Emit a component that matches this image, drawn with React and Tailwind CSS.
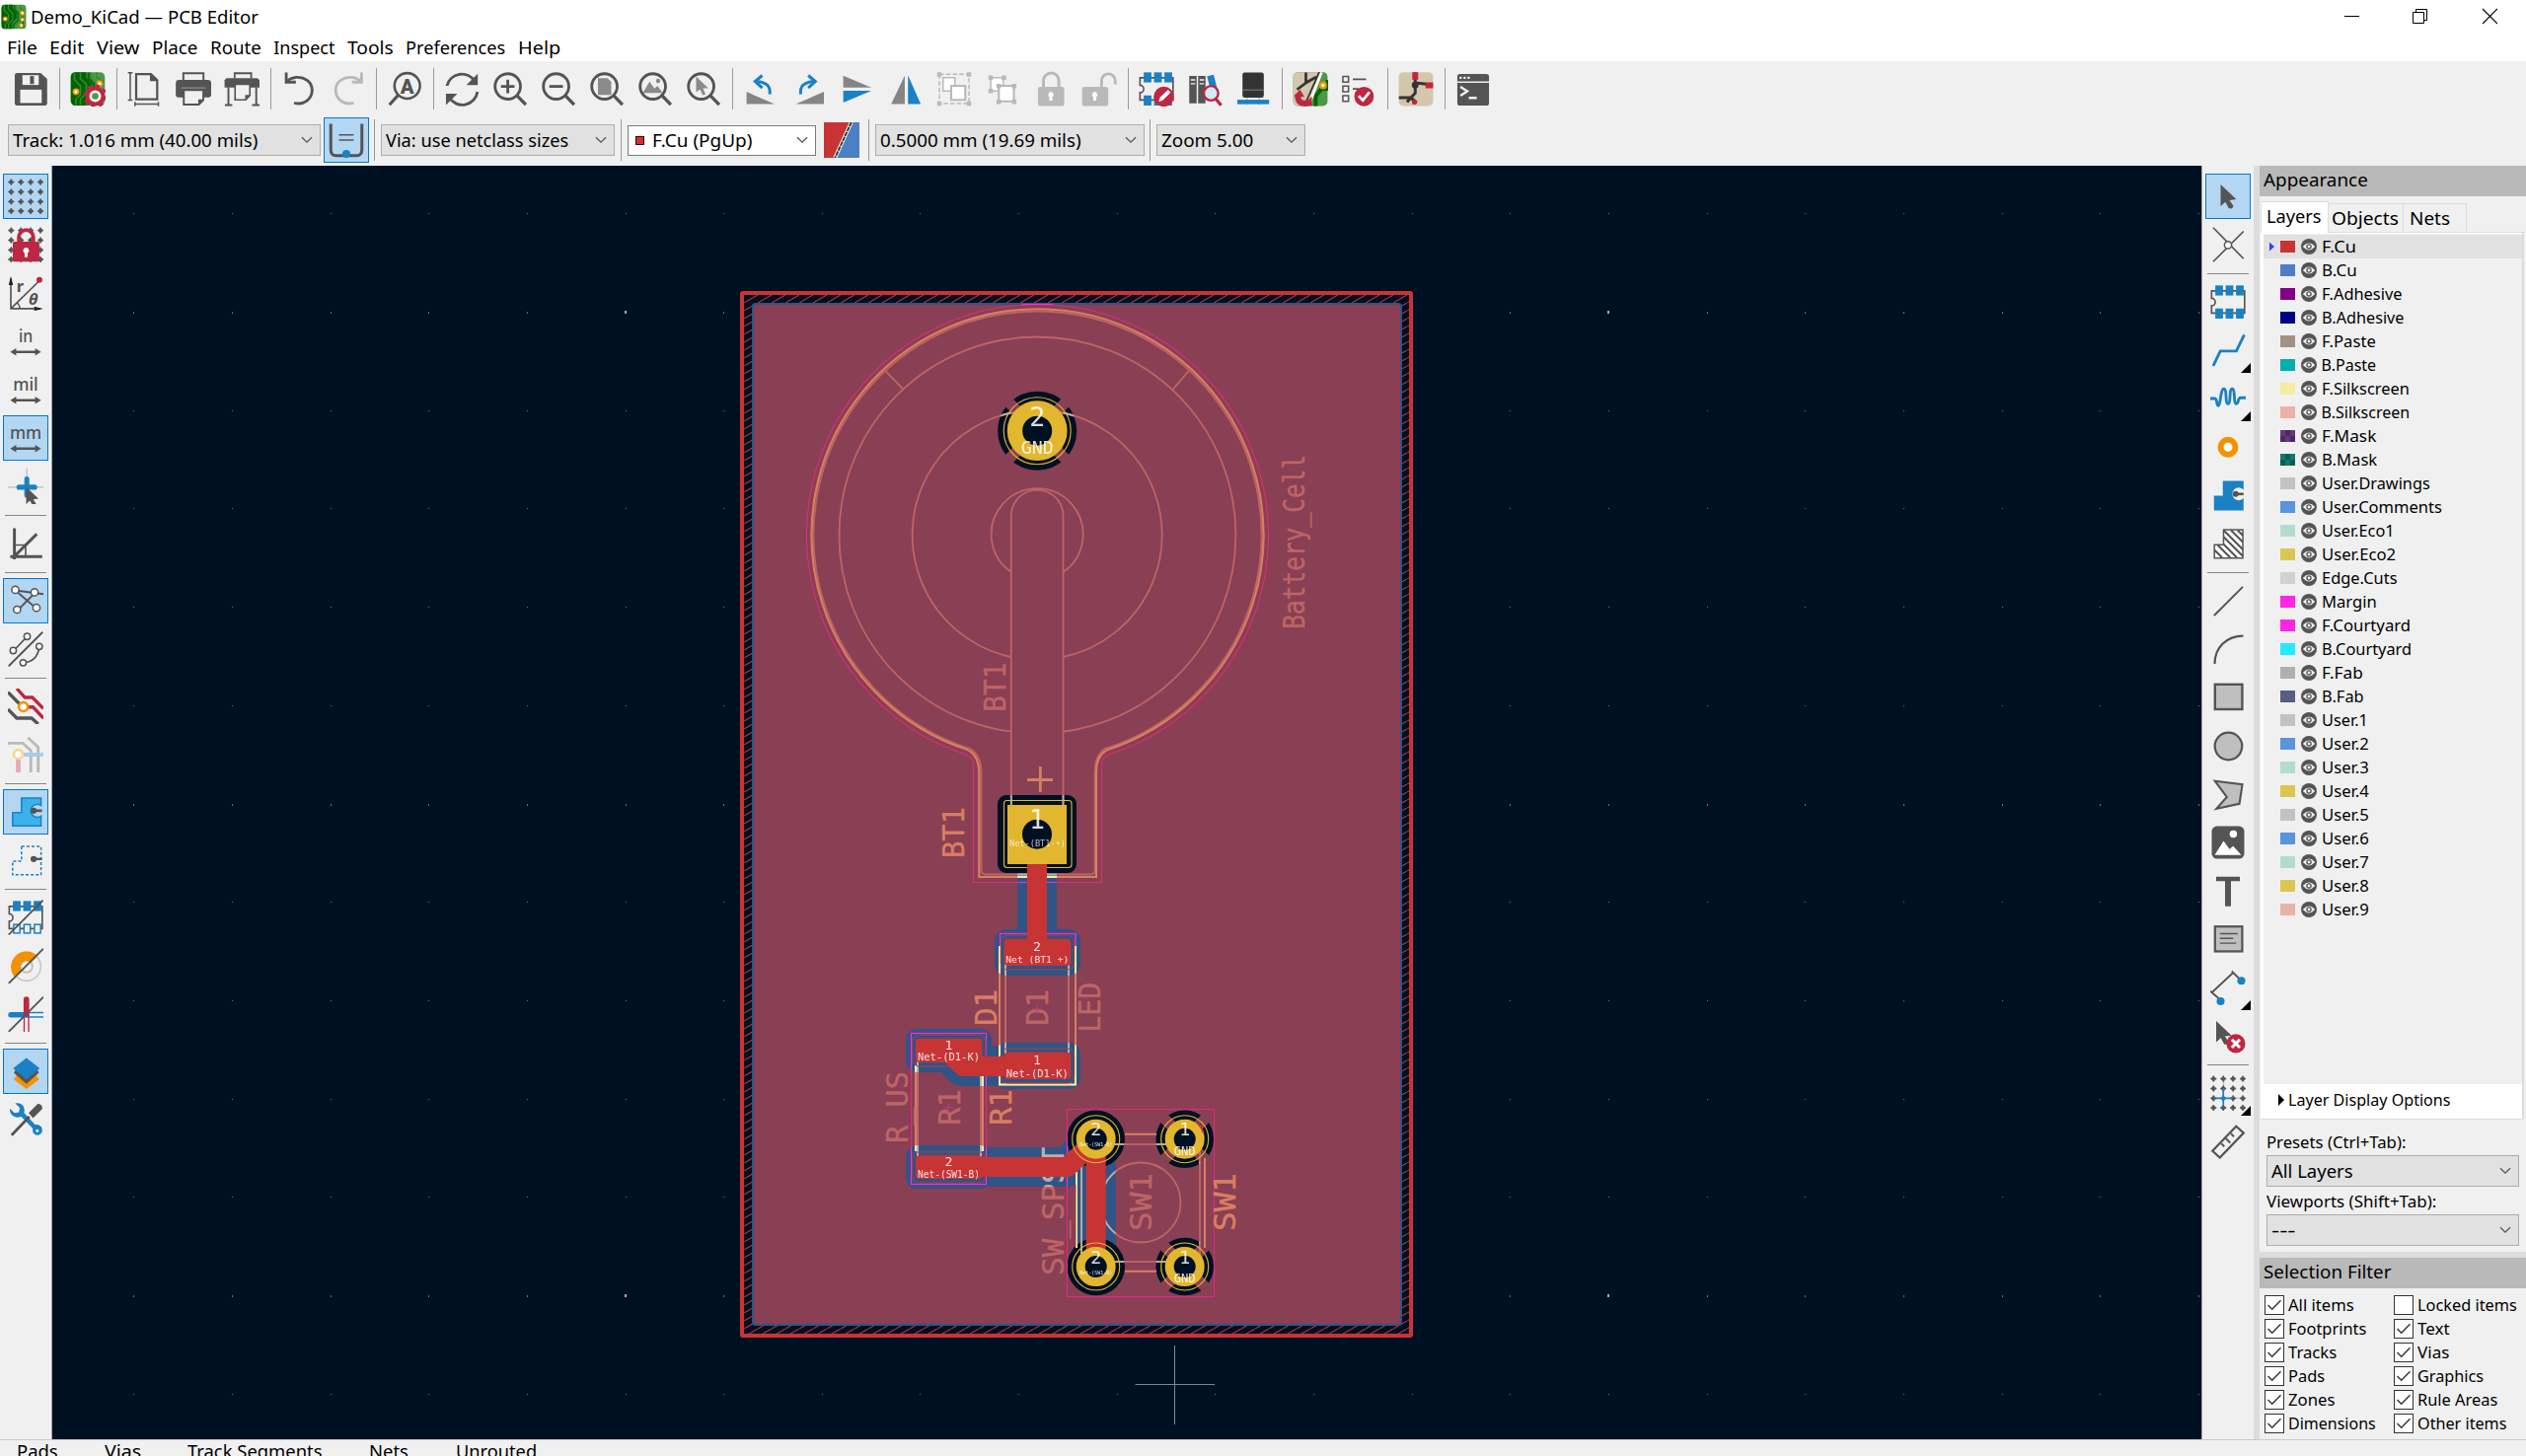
import React, { useLayoutEffect, useRef, useState } from "react";

const G = "#545454";
const B = "#1a81c4";
const R = "#bf2641";
const O = "#f39200";
const L = "#b9b9b9";

/* Single-line label squeezed or stretched to a given width. */
function T({ w, className = "", children }) {
  const ref = useRef(null);
  const [natural, setNatural] = useState(w + 2);
  useLayoutEffect(() => {
    const fit = () => ref.current && setNatural(ref.current.offsetWidth);
    fit();
    document.fonts?.ready.then(fit);
  }, [w]);
  return (
    <span
      ref={ref}
      className={"inline-block w-fit shrink-0 origin-left whitespace-nowrap " + className}
      style={{ transform: `scaleX(${(w + 2) / natural})`, marginRight: w + 2 - natural }}
    >
      {children}
    </span>
  );
}

function I({ children, className = "size-9" }) {
  return (
    <svg viewBox="0 0 24 24" fill="none" className={className + " shrink-0"}>
      {children}
    </svg>
  );
}

/* ---------- shared icon parts ---------- */
const Board = () => (
  <>
    <rect x="0.5" y="0.8" width="23" height="22.6" rx="3.2" fill="#4a9a45" />
    <path d="M0.5 4a3.2 3.2 0 0 1 3.2-3.2H11v3.6l3.6 4.2v5l-4 4.4v5.4H3.7a3.2 3.2 0 0 1-3.2-3.2Z" fill="#006400" />
    <path d="M3 1v5l4 4v6l-3 3v4M7 1v4l4 4v6l-4 4v4M14 1v4l5 5v5l-5 4v4M18 1v3l5 4" stroke="#338a33" strokeWidth="1.1" />
    <path d="M12.5 1v4l3.5 4v6l-4 4v4M20.5 12v10" stroke="#0a6a12" strokeWidth="1.6" />
    <circle cx="4" cy="14" r="1.7" fill="#fff" stroke={O} strokeWidth="1.2" />
    <circle cx="20" cy="8.5" r="1.7" fill="#fff" stroke={O} strokeWidth="1.2" />
  </>
);
const Lens = () => (
  <>
    <circle cx="10.4" cy="10.4" r="8.6" stroke={G} strokeWidth="1.9" />
    <path d="M16.6 16.6 22.6 22.8" stroke={G} strokeWidth="2.2" />
  </>
);
const Chip = ({ bottom = true }) => (
  <>
    <path d="M23.2 4.6H.9v5a2.4 2.4 0 0 1 0 5v5h22.3Z" stroke={G} strokeWidth="1.1" />
    {[3.4, 10.4, 17.4].map((x) => (
      <rect key={x} x={x} y="0.9" width="5.2" height="6.8" fill={B} />
    ))}
    {[3.4, 10.4, 17.4].map((x) =>
      bottom ? (
        <rect key={x} x={x} y="16.5" width="5.2" height="6.8" fill={B} />
      ) : (
        <rect key={x} x={x + 0.5} y="16.8" width="4.2" height="5.8" fill="#f0f0f0" stroke={B} strokeWidth="1" />
      )
    )}
  </>
);
const Dots = () => (
  <g fill={G}>
    {[2.2, 8.8, 15.4, 22].map((x) =>
      [2.4, 9, 15.6, 22].map((y) => (
        <path key={x + "-" + y} d={`M${x - 2} ${y}l1.2-.8.8-1.2.8 1.2 1.2.8-1.200.8-.8 1.200-.8-1.200Z`} stroke={G} strokeWidth=".5" />
      ))
    )}
  </g>
);
const Cursor = ({ x = 0, y = 0, s = 1 }) => (
  <path transform={`translate(${x} ${y}) scale(${s})`} d="M0 0v14.6l3.2-2.8 2.3 4.2c1.8 1 3.6-.6 2.8-2L6 10.6l4.6-.6Z" fill={G} />
);
const HArrow = () => (
  <path d="M1.6 19.2 5.6 16.7v1.7h12.8v-1.7l4 2.5-4 2.5V20H5.6v1.7Z" fill={G} />
);
const Unit = ({ t, w }) => (
  <>
    <text x="12" y="12.8" textAnchor="middle" textLength={w} lengthAdjust="spacingAndGlyphs" fontFamily="Noto Sans, sans-serif" fontWeight="500" fontSize="12.5" fill={G}>
      {t}
    </text>
    <HArrow />
  </>
);

/* ---------- main toolbar ---------- */
const topIcons = [
  <I>
    <path d="M2.8 1.3h16l4.4 4v16.5a1.5 1.5 0 0 1-1.5 1.5H2.8a1.5 1.5 0 0 1-1.5-1.5v-19A1.5 1.5 0 0 1 2.8 1.3Z" fill={G} />
    <rect x="6.5" y="2.8" width="11" height="6.6" fill="#f0f0f0" />
    <rect x="11.6" y="3.4" width="2.7" height="5.4" fill={G} />
    <rect x="5" y="12.6" width="14.5" height="9" fill="#f0f0f0" />
  </I>,
  "|",
  <I>
    <Board />
    <circle cx="17" cy="17" r="5.3" fill="#f0f0f0" stroke={R} strokeWidth="2.6" />
    <circle cx="17" cy="17" r="6.9" stroke={R} strokeWidth="2.2" strokeDasharray="2.7 2.72" />
    <circle cx="17" cy="17" r="2.2" fill="#4a9a45" />
  </I>,
  "|",
  <I>
    <path d="M6 2h10l4.200 4.200v12.900H6Z" stroke={G} strokeWidth="1.5" />
    <path d="M15.300 1.600v5.300h5.300Z" fill={G} />
    <path d="M2 1.200v18.400M.4 1.200h3.200M.4 19.600h3.200M5.200 22.400H21M5.200 20.900v3M21 20.900v3" stroke={G} strokeWidth="1" />
  </I>,
  <I>
    <path d="M5.2 6V1.5h13.6V6" stroke={G} strokeWidth="1.3" />
    <path d="M2.4 6h19.4A2.2 2.2 0 0 1 24 8.2V16a1.8 1.8 0 0 1-1.8 1.8H1.9A1.8 1.8 0 0 1 .1 16V8.2A2.2 2.2 0 0 1 2.4 6Z" fill={G} />
    <path d="M3.5 11.4h17" stroke="#888" strokeWidth="0.9" />
    <path d="M5.5 12.8h13.2v6.8l-3 3H5.5Z" fill="#f0f0f0" stroke={G} strokeWidth="1.3" />
    <path d="M15.3 22.6v-3.4h3.4Z" fill={G} />
  </I>,
  <I>
    <path d="M7.2 5V1.5h11.2V5" stroke={G} strokeWidth="1.2" />
    <path d="M.4 6.2 1.7 4.8h20.8L24 6.2V11.2H.4Z" fill={G} />
    <path d="M3 11v12M21.8 11v12M.6 23h5M19 23h5" stroke={G} strokeWidth="1.3" />
    <path d="M7.5 9h10v7.5l-2.8 3H7.5Z" fill="#f0f0f0" stroke={G} strokeWidth="1.1" />
    <path d="M14.3 19.5v-3.4h3.2Z" fill={G} />
  </I>,
  "|",
  <I>
    <path d="M3.4 1v6.5h6.5" stroke={G} strokeWidth="1.9" />
    <path d="M3.4 7.2C7 4 13 3 17.5 6.2c4.8 3.6 4.3 10.7-.3 14-2.5 1.8-5.5 2.3-8.5 1.3" stroke={G} strokeWidth="1.9" />
  </I>,
  <I>
    <g transform="translate(24 0) scale(-1 1)">
      <path d="M2.4 1v6.5h6.5" stroke={L} strokeWidth="1.9" />
      <path d="M2.4 7.2C6 4 12 3 16.5 6.2c4.8 3.6 4.3 10.7-.3 14-2.5 1.8-5.5 2.3-8.5 1.3" stroke={L} strokeWidth="1.9" />
    </g>
  </I>,
  "|",
  <I>
    <circle cx="13.8" cy="10" r="8.6" stroke={G} strokeWidth="1.7" />
    <path d="M7.6 16.4 1.8 22.8" stroke={G} strokeWidth="2.1" />
    <text x="13.8" y="15" textAnchor="middle" fontFamily="Roboto, sans-serif" fontWeight="900" fontSize="13.5" fill={G}>
      A
    </text>
  </I>,
  "|",
  <I>
    <path d="M2 10A10.3 10.3 0 0 1 20.8 7M22.6 14A10.3 10.3 0 0 1 3.4 17.6" stroke={G} strokeWidth="1.9" />
    <path d="M22.8 1.8v7.7h-7.7ZM1.3 23v-7.7H9Z" fill={G} />
  </I>,
  <I>
    <Lens />
    <path d="M10.4 5.8v9.2M5.8 10.4H15" stroke={G} strokeWidth="1.9" />
  </I>,
  <I>
    <Lens />
    <path d="M5.8 10.4H15" stroke={G} strokeWidth="1.9" />
  </I>,
  <I>
    <Lens />
    <path d="M6 4.8h6.4l2.6 2.6v8.8H6Z" fill="#8a8a8a" />
  </I>,
  <I>
    <Lens />
    <path d="m3.6 14.8 4.6-7.6 3.4 4.6 2-1.8 3.4 4.8Z" fill="#8a8a8a" />
    <circle cx="14" cy="6.6" r="1.5" fill="#8a8a8a" />
  </I>,
  <I>
    <Lens />
    <path d="M7 3.6v10.8l2.6-2 1.8 4 2-.8-1.8-4h3.6Z" fill="#8a8a8a" />
  </I>,
  "|",
  <I>
    <path d="M2.4 14v8.4h19Z" fill="#858585" />
    <path d="M18 15.6c.8-5-2-8.3-8.6-8.5" stroke={B} strokeWidth="2" />
    <path d="M13 3 8.2 7.1l4.8 4.3" stroke={B} strokeWidth="2" />
  </I>,
  <I>
    <path d="M22 14v8.4H3Z" fill="#858585" />
    <path d="M6.4 15.6c-.8-5 2-8.3 8.6-8.5" stroke={B} strokeWidth="2" />
    <path d="m11.4 3 4.8 4.1-4.8 4.3" stroke={B} strokeWidth="2" />
  </I>,
  <I>
    <path d="M2.4 3.2v8h19Z" fill="#858585" />
    <path d="M2.4 21.3v-8h19Z" fill={B} />
  </I>,
  <I>
    <path d="M11.300 3v19.300H2.100Z" fill="#858585" />
    <path d="M13.500 3v19.300h8.600Z" fill={B} />
  </I>,
  <I>
    <rect x="2" y="2.2" width="20" height="19.8" stroke={L} strokeWidth="1" strokeDasharray="3 1.5" />
    <path d="M4.5 4.5h8v9h-8Z" fill="#fff" stroke={L} />
    <path d="M10 10h9.5v9.5H10Z" fill="#fff" stroke={L} strokeWidth="1.4" />
    <path d="M.5.8h3v3h-3ZM20.5.8h3v3h-3ZM.5 20.5h3v3h-3ZM20.5 20.5h3v3h-3Z" fill={L} />
  </I>,
  <I>
    <path d="M4 4.5h8.5v9H4Z" fill="#fff" stroke={L} />
    <path d="M9.5 10h10.2v10.500H9.5Z" fill="#fff" stroke={L} strokeWidth="1.4" />
    <path d="M2.5 3h3v3h-3ZM11.5 3h3v3h-3ZM2.5 12h3v3h-3ZM8 8.6h3v3H8ZM18.4 8.6h3v3h-3ZM8 19.3h3v3H8ZM18.4 19.3h3v3h-3Z" fill={L} />
  </I>,
  <I>
    <path d="M7 11V6.5a5.2 5.2 0 0 1 10.4 0V11" stroke={L} strokeWidth="2" />
    <rect x="3.3" y="10.6" width="17.7" height="13" rx="1.5" fill={L} />
    <path d="M12 14a2 2 0 0 0-1 3.6V20h2v-2.4A2 2 0 0 0 12 14Z" fill="#fff" />
  </I>,
  <I>
    <path d="M13.6 11V6.5a4.6 4.6 0 0 1 9.2 0V9" stroke={L} strokeWidth="1.9" />
    <rect x=".4" y="10.6" width="17.7" height="13" rx="1.5" fill={L} />
    <path d="M9 14a2 2 0 0 0-1 3.6V20h2v-2.4A2 2 0 0 0 9 14Z" fill="#fff" />
  </I>,
  "|",
  <I>
    <Chip />
    <circle cx="17" cy="17.3" r="6.8" fill={R} />
    <path d="m13.500 20.800.9-3 5.500-5.200 1.700 1.900-5.400 5.300Z" fill="#fff" />
  </I>,
  <I>
    <path d="M1.5 3.300h5v18.500h-5ZM7.500 3.300h5v18.500h-5Z" fill={G} />
    <path d="M2.5 6h3M2.5 8.6h3M8.5 6h3M8.5 8.6h3" stroke="#f0f0f0" strokeWidth=".9" />
    <path d="m13.500 3.500 4.500-1 3 12-4.500 1Z" fill={B} />
    <circle cx="16.2" cy="15" r="4.9" fill="#cfe9f7" stroke={R} strokeWidth="1.6" />
    <path d="m19.500 19 3.600 4.200" stroke={R} strokeWidth="2.2" />
  </I>,
  <I>
    <rect x="4.8" y="1" width="14.4" height="17" rx="1.5" fill="#333" />
    <path d="M4.8 12.8h14.4" stroke="#777" strokeWidth=".8" />
    <path d="M8 18v5M16 18v5" stroke={L} strokeWidth=".8" />
    <rect x="1.3" y="19.4" width="21.5" height="3" fill={B} />
  </I>,
  "|",
  <I>
    <rect x=".4" y=".8" width="23.2" height="22.8" rx="3" fill="#4a9a45" />
    <path d="M3.4.8H19L11 23.6H3.4a3 3 0 0 1-3-3V3.8a3 3 0 0 1 3-3Z" fill="#d3c6ab" />
    <path d="M9 1v7l-6 4.5M9 8l7-4" stroke="#333" strokeWidth="1.8" />
    <path d="M23.600 6v6h-4l-4 5v6.600" stroke="#006400" strokeWidth="2.6" />
    <path d="M19.5 1 11 23" stroke="#fff" strokeWidth="1.8" />
    <path d="M18 .8 9.5 20" stroke="#333" strokeWidth="1.2" />
    <circle cx="20.6" cy="9.6" r="1.9" fill="#fff" stroke={O} strokeWidth="1.5" />
    <path d="M10.500 21.500C4 23 3.500 19 3.500 16" stroke={R} strokeWidth="4" />
    <path d="M.8 17 5 12.500l3 5ZM13 17v6.500H7Z" fill={R} />
  </I>,
  <I>
    <path d="M1.3 3.7h3.8v3.8H1.3ZM1.3 10.2h3.8V14H1.3ZM1.3 16.7h3.8v3.8H1.3Z" stroke={G} strokeWidth="1" />
    <path d="M8 5.6h9M8 12.1h4" stroke={G} strokeWidth="1.2" />
    <circle cx="15.6" cy="17.2" r="6.6" fill={R} />
    <path d="m12 16.800 2.800 3 4.500-5.600" stroke="#fff" strokeWidth="1.8" />
  </I>,
  "|",
  <I>
    <rect x=".4" y=".8" width="23.2" height="22.8" rx="3" fill="#d3c6ab" />
    <path d="M11.5 1v7l9 1M11.5 8v7l-3 3H.5M8.5 18l4 3.5M8.5 18l-2.5 3" stroke="#333" strokeWidth="2" />
    <circle cx="11.5" cy="9.5" r="2.300" fill="#333" />
    <path d="M9.5.8h4v5h-4ZM18.5 7.7h5.1v4h-5.1Z" fill={R} />
    <circle cx="11" cy="21" r="1.7" fill={R} />
  </I>,
  "|",
  <I>
    <rect x="1.3" y="2" width="21.4" height="21.4" rx="1.8" fill={G} />
    <path d="M1.3 7.5h21.4" stroke="#f0f0f0" strokeWidth="1" />
    <path d="M2.8 3.9h1.5v1.5H2.8ZM5.5 3.9H7v1.5H5.5ZM8.2 3.9h1.5v1.5H8.2Z" fill="#f0f0f0" />
    <path d="m3.400 10.600 4.600 3-4.600 3M9 18.200h5.400" stroke="#f0f0f0" strokeWidth="1.6" />
  </I>,
];

/* ---------- left toolbar ---------- */
const leftIcons = [
  { on: true, i: <I><Dots /></I> },
  {
    i: (
      <I>
        <Dots />
        <rect x="3.3" y="10" width="18" height="13.5" rx="1" fill={R} />
        <path d="M7.4 11V7a4.9 4.9 0 0 1 9.8 0v4" stroke={R} strokeWidth="2.5" />
        <path d="M12.3 14a2 2 0 0 0-1 3.7V20.5h2v-2.8a2 2 0 0 0-1-3.7Z" fill="#fff" />
      </I>
    ),
  },
  {
    i: (
      <I>
        <path d="M2 23.2V2M2 22.6h20M2 22.6 21 4" stroke={G} strokeWidth="1.1" />
        <path d="m2 .6 1.500 6H.5ZM23.800 22.600l-6-1.500v3Z" fill="#222" />
        <circle cx="21.3" cy="3.2" r="2" fill={R} />
        <path d="M6 18.5a5 5 0 0 1 2 4" stroke={G} />
        <text x="5.8" y="11" fontFamily="Noto Sans, sans-serif" fontWeight="700" fontSize="11" fill={G}>r</text>
        <text x="14" y="19.8" fontFamily="Noto Sans, sans-serif" fontStyle="italic" fontWeight="700" fontSize="11" fill={G}>θ</text>
      </I>
    ),
  },
  { i: <I><Unit t="in" w="9.5" /></I> },
  { i: <I><Unit t="mil" w="17" /></I> },
  { on: true, i: <I><Unit t="mm" w="21.5" /></I> },
  {
    i: (
      <I>
        <path d="M12.8 0v24M0 12.6h24" stroke={L} strokeWidth=".8" />
        <path d="M12.8 7v11M7.5 12.6h10.6" stroke={B} strokeWidth="3.4" strokeLinecap="round" />
        <Cursor x={12.4} y={12.5} s={0.78} />
      </I>
    ),
  },
  "-",
  {
    i: (
      <I>
        <path d="M4.4 1.6v21M1.6 20.8h21.6M3 22 19.5 5.600" stroke={G} strokeWidth="2" />
        <path d="M5 13h7v7" stroke={G} strokeWidth="1.1" />
      </I>
    ),
  },
  "-",
  {
    on: true,
    i: (
      <I>
        <path d="M5 5 19 17M6 19 18 7M5 5l19 2.5" stroke={G} strokeWidth="1.2" />
        {[[5, 4.6], [18, 6.3], [6.2, 18], [19.3, 16.8]].map(([x, y]) => (
          <circle key={x} cx={x} cy={y} r="2.4" fill="#fff" stroke={G} strokeWidth="1" />
        ))}
      </I>
    ),
  },
  {
    i: (
      <I>
        <path d="M.5 23.5 23.5.5M4 13 13 3.5M10.5 21c6 0 10-4 10.500-10" stroke={G} strokeWidth="1.2" />
        {[[3.6, 13], [13, 3.5], [10.3, 21.2], [21.2, 10.2]].map(([x, y]) => (
          <circle key={x} cx={x} cy={y} r="2.1" fill="#fff" stroke={G} strokeWidth="1" />
        ))}
      </I>
    ),
  },
  "-",
  {
    i: (
      <I>
        <path d="M0 2.5 6 8.5l3 3M0 14l6 6h10l4.500 4" stroke={G} strokeWidth="2.2" />
        <path d="m6 0 5.500 6h5L24 13.500M12 12.500h5L24 20" stroke={R} strokeWidth="2.2" />
        <circle cx="10.4" cy="12.3" r="3" fill="#fff" stroke={O} strokeWidth="1.7" />
      </I>
    ),
  },
  {
    i: (
      <I>
        <path d="M0 4.2h10l5.500 5V24M13.500.5 20.500 7v17" stroke={L} strokeWidth="1.9" />
        <path d="M7 12v12" stroke="#e8a9b6" strokeWidth="3.2" />
        <path d="M10 12h14" stroke="#a6cde8" strokeWidth="2.6" />
        <circle cx="7" cy="11.8" r="3" fill="#fff" stroke="#fbd49b" strokeWidth="1.8" />
      </I>
    ),
  },
  "-",
  {
    on: true,
    i: (
      <I>
        <path d="M9.2 2.7h13.2v5a4.4 4.4 0 1 0 0 7.2v6.6H3.2v-9h6Z" fill="#3db2ea" stroke={B} strokeWidth="1" />
        <circle cx="17.4" cy="11.2" r="2.1" fill={G} />
        <path d="M17 11.2h6" stroke={G} strokeWidth="1.8" />
      </I>
    ),
  },
  {
    i: (
      <I>
        <path d="M9.2 2.7h13.2v19.2H3.2v-9.2h6Z" stroke={B} strokeWidth="1" strokeDasharray="2 1.4" />
        <circle cx="17.4" cy="11.2" r="2.1" fill={G} />
        <path d="M17 11.2h6" stroke={G} strokeWidth="1.6" />
      </I>
    ),
  },
  "-",
  { i: <I><Chip bottom={false} /><path d="M.5 23.7 23.7.5" stroke={G} strokeWidth="1.2" /></I> },
  {
    i: (
      <I>
        <circle cx="12.6" cy="12.5" r="9.6" stroke="#c4c4c4" strokeWidth="1" />
        <circle cx="12.6" cy="12.5" r="4" stroke="#c4c4c4" strokeWidth="1.5" />
        <path d="M5 20A10.3 10.3 0 1 1 20 5.5l-4.500 4.500A4 4 0 1 0 9.500 15.500Z" fill={O} />
        <path d="M.5 24 24 .5" stroke={G} strokeWidth="1.2" />
      </I>
    ),
  },
  {
    i: (
      <I>
        <path d="M2 12.5h10" stroke={B} strokeWidth="3.6" strokeLinecap="round" />
        <path d="M12 11h12M12 14h12" stroke={B} strokeWidth=".9" />
        <path d="M12.5 2v10" stroke={R} strokeWidth="3.8" strokeLinecap="round" />
        <path d="M11 12v12M14 12v12" stroke={R} strokeWidth=".9" />
        <path d="M.5 24 24 .5" stroke={G} strokeWidth="1.2" />
      </I>
    ),
  },
  "-",
  {
    on: true,
    i: (
      <I>
        <path d="m4 17.500 8.500 6.500 8.500-6.500-2-3-6.500 4.500L6 14.500Z" fill={O} />
        <path d="m4 13 8.500 7.500L21 13l-2-3.500-6.500 5L6 10Z" fill={G} />
        <path d="M12.5 3 21.5 10l-9 7.500L3.500 10Z" fill={B} />
      </I>
    ),
  },
  {
    i: (
      <I>
        <path d="M1.3 4.5 4.5 7.5 7.5 7 8 4 5 1C9 0 12 3 11 7.500l7.500 8c3-.8 5.500 2 4.500 5-1.500 3-5.500 2.500-6.200-.5-.2-1 0-1.500 0-2L9 10C5 11.500 1 9 1.300 4.500Z" fill={B} />
        <circle cx="19.8" cy="19.5" r="1" fill="#f0f0f0" />
        <path d="M2.5 22.5 14.5 10" stroke={G} strokeWidth="1.8" />
        <path d="M14 7.5 20 1.5c1.500-.8 4 1.500 3 3.500L17 11Z" fill={G} />
      </I>
    ),
  },
];

/* ---------- right toolbar ---------- */
const rightIcons = [
  { on: true, i: <I><Cursor x={7} y={4} s={1} /></I> },
  {
    i: (
      <I>
        <path d="m2 .500 20.500 21M22.500 3 2 23.500" stroke={G} strokeWidth="1.1" />
        <circle cx="12" cy="12.3" r="2.4" fill="#fff" stroke={G} strokeWidth="1" />
      </I>
    ),
  },
  "-",
  { i: <I><Chip /></I> },
  { more: true, i: <I><path d="m2 22.600 4.800-10h10.800L23 1.600" stroke={B} strokeWidth="1.9" /></I> },
  {
    more: true,
    i: (
      <I>
        <path d="M0 12h3c2 0 1 4.800 2.500 4.800S6.800 5.500 9.200 5.500s.6 10 2.800 10 .5-10 2.800-10 .7 10 2.800 10c1.600 0 .9-4 3-4H24" stroke={B} strokeWidth="1.9" />
      </I>
    ),
  },
  { i: <I><circle cx="12" cy="12.2" r="5" fill="#fff" stroke={O} strokeWidth="4" /></I> },
  {
    i: (
      <I>
        <path d="M8.5 2.3h14v6.100a4.300 4.300 0 1 0 0 5.600v8.300h-20v-10h6Z" fill={B} />
        <circle cx="17.2" cy="11.2" r="2" fill={G} />
        <path d="M17 11.2h5.500" stroke={G} strokeWidth="1.7" />
      </I>
    ),
  },
  {
    i: (
      <I>
        <path d="M9 2.7h13v19.2H2.8v-9H9Z" fill="#fff" stroke={G} strokeWidth="1" />
        <path d="m9 3 13 13M9 7.500l13 13M14 3l8 8M18.500 3l3.500 3.500M9 12.500l9 9M5 13l8.500 8.500M3 16.500l5 5" stroke={G} strokeWidth="1.4" />
      </I>
    ),
  },
  "-",
  { i: <I><path d="M2.6 22 22 2.6" stroke={G} strokeWidth="1.3" /></I> },
  { i: <I><path d="M3 22C3 11 11 3 22.3 3" stroke={G} strokeWidth="1.5" /></I> },
  { i: <I><rect x="3.2" y="3.2" width="18.4" height="16.8" fill="#bfbfbf" stroke={G} strokeWidth="1.6" /></I> },
  { i: <I><circle cx="12.3" cy="12.3" r="9.2" fill="#bfbfbf" stroke={G} strokeWidth="1.5" /></I> },
  { i: <I><path d="m3.200 3.200 18.500 2.300-2 13L4.200 21.800l7-7.800Z" fill="#bfbfbf" stroke={G} strokeWidth="1.4" /></I> },
  {
    i: (
      <I>
        <rect x="1" y="1" width="22" height="22" rx="3.5" fill={G} />
        <path d="m3 20.500 6-9.500 4 5.500 2.500-2 5.500 6Z" fill="#fff" />
        <circle cx="15.6" cy="6.3" r="2.5" fill="#fff" />
      </I>
    ),
  },
  { i: <I><path d="M4 2.500h16v3H14v17h-4V5.500H4Z" fill={G} /></I> },
  {
    i: (
      <I>
        <rect x="3.2" y="3.5" width="18.4" height="16.8" fill="#bfbfbf" stroke={G} strokeWidth="1.5" />
        <path d="M6.5 8.300h12M6.500 11.500h9M6.500 14.700h11" stroke={G} strokeWidth=".9" />
      </I>
    ),
  },
  {
    more: true,
    i: (
      <I>
        <path d="M1 15.5 15.5 2M0 14.500l7 6M14.500 1l6 6" stroke={G} strokeWidth="1.2" />
        <circle cx="21" cy="7.5" r="2.7" fill={B} />
        <circle cx="7" cy="21.3" r="2.7" fill={B} />
      </I>
    ),
  },
  {
    i: (
      <I>
        <Cursor x={4} y={2} s={0.98} />
        <circle cx="17.3" cy="17.3" r="6.4" fill={R} />
        <path d="m14.600 14.600 5.400 5.400M20 14.600l-5.400 5.400" stroke="#fff" strokeWidth="2" />
      </I>
    ),
  },
  "-",
  {
    more: true,
    i: (
      <I>
        <path d="M9 2v20M2 15.5h20" stroke={L} strokeWidth=".8" />
        <Dots />
        <path d="M8.8 9v12M3 15.6h12" stroke={B} strokeWidth="1.1" />
      </I>
    ),
  },
  {
    i: (
      <I>
        <path d="M1.5 18.5 17.5 1.8l5 4.500L6.500 23Z" stroke={G} strokeWidth="1.5" />
        <path d="m7.500 13.500 2 2M10.500 10l3 3M14 6.800l2 2" stroke={G} strokeWidth="1.3" />
      </I>
    ),
  },
];

function SideBar({ items }) {
  return items.map((it, k) =>
    it === "-" ? (
      <div key={k} className="flex h-[9px] items-center justify-center">
        <div className="h-px w-[42px] bg-[#858585]" />
      </div>
    ) : (
      <div key={k} className="flex h-[49px] items-center justify-center">
        <div
          className={
            "relative flex size-[46px] items-center justify-center " +
            (it.on ? "border border-[#0078d7] bg-[#b3d6f3]" : "")
          }
        >
          {it.i}
          {it.more && (
            <svg viewBox="0 0 10 10" className="absolute right-0 bottom-0 size-2.5">
              <path d="M10 0v10H0Z" fill="#000" />
            </svg>
          )}
        </div>
      </div>
    )
  );
}

function Combo({ children, className = "", white = false }) {
  return (
    <div
      className={
        "flex items-center justify-between border pr-[7px] pl-1 " +
        (white ? "border-[#7a7a7a] bg-white " : "border-[#adadad] bg-[#e1e1e1] ") +
        className
      }
    >
      <div className="flex items-center">{children}</div>
      <svg viewBox="0 0 12 8" className="h-2 w-3 shrink-0" fill="none">
        <path d="m1 1.200 5 5 5-5" stroke="#555" strokeWidth="1.3" />
      </svg>
    </div>
  );
}
const VSep = () => <div className="h-[42px] w-px shrink-0 bg-[#9a9a9a]" />;

/* ---------- board drawing ---------- */
const ZONE = "#893f54";
const DARK = "#001023";
const CU = "#c83434";
const GOLD = "#e2b62e";
const CLEAR = "#2f5586";
const MONO = '"DejaVu Sans Mono", monospace';

function VT({ x, y, len, h = 22.5, fill, children }) {
  return (
    <text
      transform={`translate(${x} ${y + 1}) rotate(-90)`}
      fontFamily={MONO}
      fontSize={h / 0.729}
      textLength={len + 3}
      lengthAdjust="spacingAndGlyphs"
      fill={fill}
      stroke={fill}
      strokeWidth="0.4"
    >
      {children}
    </text>
  );
}
function PT({ x, y, w, h, children, op = 0.85 }) {
  return (
    <text
      x={x}
      y={y}
      textAnchor="middle"
      fontFamily={MONO}
      fontSize={h / 0.729}
      textLength={w}
      lengthAdjust="spacingAndGlyphs"
      fill="#fff"
      fillOpacity={op}
    >
      {children}
    </text>
  );
}

/* Clearance cut-outs around tracks and SMD pads. */
const Clearances = ({ c }) => (
  <g stroke={c} fill={c}>
    <g strokeWidth="0">
      <rect x="1031" y="880" width="40" height="70" />
      <path d="M1027 942.500h48v4h-48ZM1071 938q.5 5 5 5h-5ZM1031 938q-.5 5-5 5h5Z" />
      <rect x="1008" y="942" width="87" height="47" rx="12" />
      <rect x="1008" y="1057" width="87" height="47" rx="12" />
      <rect x="918" y="1043" width="87" height="44" rx="12" />
      <rect x="918" y="1161" width="87" height="44" rx="12" />
      <path d="M1003 1055q1 6 8 6v10h-10Z" />
    </g>
    <path d="M961 1066 976 1081H1030M961 1183H1082L1110.700 1155V1284" fill="none" strokeWidth="40" strokeLinejoin="round" />
  </g>
);

const Thermal = ({ cx, cy, r, inner, c, spoke }) => (
  <g>
    <circle cx={cx} cy={cy} r={(r + inner) / 2} fill="none" stroke={c} strokeWidth={r - inner} />
    <path
      d={`M${cx - r} ${cy - r}l${2 * r} ${2 * r}M${cx + r} ${cy - r}l${-2 * r} ${2 * r}`}
      stroke={spoke}
      strokeWidth="11"
    />
  </g>
);
const Voids = ({ c, spoke }) => (
  <g>
    <Thermal cx={1051.2} cy={436.7} r={40} inner={29} c={c} spoke={spoke} />
    <Thermal cx={1200.7} cy={1154.7} r={29.3} inner={19} c={c} spoke={spoke} />
    <Thermal cx={1200.7} cy={1284} r={29.3} inner={19} c={c} spoke={spoke} />
    <circle cx="1110.7" cy="1154.7" r="29.3" fill={c} />
    <circle cx="1110.7" cy="1284" r="29.3" fill={c} />
    <rect x="1011" y="806" width="80" height="79" rx="9" fill={c} />
  </g>
);

/* Courtyards and the round fabrication outlines. */
const Rounds = ({ fab, yard }) => (
  <g fill="none">
    <g stroke={yard} strokeWidth="1.1">
      <path d="M964 759.500Q980 765 984 768 986.500 770 986.500 776V894.500H1116.500V776Q1116.500 770 1119 768 1123 765 1139 759.500A234 234 0 1 0 964 759.500Z" />
      <rect x="1013.5" y="946.5" width="76.5" height="153" />
      <rect x="923.5" y="1047.5" width="76" height="153" />
      <rect x="1081.5" y="1124.5" width="149" height="190" />
    </g>
    <g stroke={fab} strokeWidth="1.8">
      <path d="M982 758.600A227 227 0 1 1 1121 758.600" />
      <circle cx="1051.4" cy="542.5" r="201" />
      <path d="M1024.800 666A126.500 126.500 0 1 1 1077.500 666M1024.800 580A46.500 46.500 0 1 1 1077.500 580" />
    </g>
  </g>
);
/* Silkscreen, straight fabrication outlines and designators. */
const Outlines = ({ silk, fab }) => (
  <g fill="none">
    <g stroke={fab} strokeWidth="1.8">
      <path d="M1024.800 820V523A26.300 26.300 0 0 1 1077.500 523V820" />
      <path d="M897 375.700 915.500 394.700M1205 375.700 1188 395.700" />
      <path d="M982 758Q994.500 765 994.500 783V882Q994.500 886.500 999 886.500H1105Q1109.500 886.500 1109.500 882V783Q1109.500 765 1121 758" />
      <path d="M1019 976V1068M1083 976V1068M930 1075V1173M994 1075V1173" strokeWidth="2" />
      <rect x="1096" y="1160" width="120" height="119" />
      <circle cx="1156" cy="1219" r="40.5" />
    </g>
    <g stroke={silk} strokeWidth="2.2">
      <path d="M980 759.800Q992 765 992.300 783V889H1111V783Q1111 765 1123 759.800A229 229 0 1 0 980 759.800Z" />
      <path d="M1013 959V1099.500H1090V959M928 1080V1167M996 1080V1167" strokeWidth="2" />
      <path d="M1140 1149.800H1172M1140 1288.700H1172M1221 1174V1265M1091 1174V1265" strokeWidth="2" />
      <path d="M1041 790.500H1067M1054.300 777V803" strokeWidth="2.8" />
    </g>
    <VT x={1322} y={636.7} len={174} fill={fab}>Battery_Cell</VT>
    <VT x={1019} y={720.7} len={47} fill={fab}>BT1</VT>
    <VT x={977} y={869} len={49} fill={silk}>BT1</VT>
    <VT x={1010} y={1038.7} len={34} fill={silk}>D1</VT>
    <VT x={1062} y={1038.7} len={34} fill={fab}>D1</VT>
    <VT x={1115} y={1045.7} len={48} fill={fab}>LED</VT>
    <VT x={973} y={1140} len={34} fill={fab}>R1</VT>
    <VT x={1025} y={1140} len={34} fill={silk}>R1</VT>
    <VT x={920} y={1158} len={70} fill={fab}>R_US</VT>
    <VT x={1078} y={1291.7} len={127} fill={fab}>SW_SPST</VT>
    <VT x={1167} y={1247} len={56} fill={fab}>SW1</VT>
    <VT x={1252} y={1247} len={56} fill={silk}>SW1</VT>
  </g>
);
const Graphics = ({ silk, fab, yard, slot }) => (
  <>
    <Rounds fab={fab} yard={yard} />
    {slot && <rect x="1024" y="585" width="54" height="200" fill={ZONE} />}
    <Outlines silk={silk} fab={fab} />
  </>
);

const Smd = ({ x, y, w = 67.5, h }) => (
  <>
    <rect x={x} y={y} width={w} height={h} rx="4" fill={CU} />
    <rect x={x - 3.5} y={y - 3.5} width={w + 7} height={h + 7.5} rx="7" fill="none" stroke={CU} strokeWidth="1" />
  </>
);
const Tht = ({ cx, cy, r, ring, hole }) => (
  <>
    <circle cx={cx} cy={cy} r={(r + hole) / 2} fill={DARK} stroke={GOLD} strokeWidth={r - hole} />
    <circle cx={cx} cy={cy} r={ring} fill="none" stroke={GOLD} strokeWidth="1.1" />
  </>
);

function Canvas() {
  const dots = [];
  for (let i = -5; i <= 16; i++)
    for (let j = -1; j <= 11; j++) {
      const big = ((i % 10) + 10) % 10 === 0 && ((j % 10) + 10) % 10 === 0;
      const x = 633.5 + i * 99.65;
      const y = 316 + j * 99.7;
      dots.push(
        <rect
          key={i + "," + j}
          x={Math.round(x) - (big ? 1 : 0)}
          y={Math.round(y) - (big ? 1 : 0)}
          width={big ? 2 : 1}
          height={big ? 3 : j % 5 === 0 ? 2 : 1}
          fill={big ? "#a4acb0" : "#66727c"}
        />
      );
    }
  return (
    <svg viewBox="53 168 2178 1291" className="h-[1291px] w-[2178px] shrink-0 bg-[#001023]">
      <defs>
        <pattern id="hatch" width="14" height="8" patternUnits="userSpaceOnUse" x="754" y="299">
          <path d="M-1 8.600 15 -.600" stroke={CU} strokeWidth="1.1" />
        </pattern>
        <mask id="cut" maskUnits="userSpaceOnUse" x="740" y="280" width="710" height="1090">
          <Clearances c="#fff" />
          <Voids c="#fff" spoke="#000" />
        </mask>
      </defs>
      {dots}
      <rect x="754" y="299" width="674" height="1053" fill="url(#hatch)" />
      <rect x="763" y="308" width="657" height="1035" rx="3" fill={ZONE} stroke={CLEAR} strokeWidth="2" />
      <rect x="752" y="297" width="678" height="1057" rx="1" fill="none" stroke={CU} strokeWidth="4" />
      <Clearances c={CLEAR} />
      <Voids c={DARK} spoke={ZONE} />
      <Graphics silk="#d97f60" fab="#bd6565" yard="#dc2c7c" slot />
      <g mask="url(#cut)">
        <Graphics silk="#f2eda1" fab="#b2b2b2" yard="#ff26e2" />
      </g>
      <path d="M1035 308.500H1067" stroke="#ff26e2" strokeWidth="1.2" />
      <path d="M1046 1023h10M1051 1018v10M956 1123h10M961 1118v10" stroke="#b0446f" />

      <g fill="none" stroke={CU} strokeWidth="20" strokeLinejoin="round" strokeLinecap="round">
        <path d="M1051 860V960M961 1066 976 1081H1025M961 1183H1082L1110.700 1155V1284" />
      </g>
      <Smd x={1017.7} y={951.7} h={27.3} />
      <Smd x={1017.7} y={1066.7} h={27.3} />
      <Smd x={928} y={1052.7} h={24.3} />
      <Smd x={928} y={1171.3} h={23.7} />

      <rect x="1021" y="816" width="60" height="60" fill={GOLD} />
      <rect x="1017.5" y="811.5" width="68.5" height="68" rx="3" fill="none" stroke={GOLD} strokeWidth="1.1" />
      <rect x="1041" y="876.5" width="20" height="10" fill={CU} />
      <circle cx="1051" cy="845.7" r="15" fill={DARK} />
      <Tht cx={1051.2} cy={436.7} r={30.4} ring={34} hole={15} />
      <Tht cx={1110.7} cy={1154.7} r={20} ring={24} hole={11} />
      <Tht cx={1110.7} cy={1284} r={20} ring={24} hole={11} />
      <Tht cx={1200.7} cy={1154.7} r={20} ring={24} hole={11} />
      <Tht cx={1200.7} cy={1284} r={20} ring={24} hole={11} />
      <path d="M1210 1136.500A20.500 20.500 0 0 1 1220.500 1147.500L1219 1149Q1216 1141 1210 1136.500Z" fill={CU} />

      <PT x={1051.2} y={431.5} w={16} h={20}>2</PT>
      <PT x={1051.2} y={460} w={33} h={13}>GND</PT>
      <PT x={1051} y={840} w={16} h={19.5}>1</PT>
      <PT x={1051.5} y={857.5} w={57} h={6.5} op={0.7}>Net-(BT1-+)</PT>
      <PT x={1051} y={963.5} w={8} h={9}>2</PT>
      <PT x={1051.3} y={976} w={64} h={6.8}>Net (BT1 +)</PT>
      <PT x={1051} y={1078.5} w={8} h={9}>1</PT>
      <PT x={1051.3} y={1092} w={63} h={8}>Net-(D1-K)</PT>
      <PT x={961.5} y={1063.5} w={8} h={9}>1</PT>
      <PT x={961.5} y={1075} w={63} h={8}>Net-(D1-K)</PT>
      <PT x={961.5} y={1181.5} w={8} h={9}>2</PT>
      <PT x={961.5} y={1194} w={63} h={8}>Net-(SW1-B)</PT>
      {[1151, 1280.5].map((y) => (
        <g key={y}>
          <PT x={1110.7} y={y} w={11} h={13.5}>2</PT>
          <PT x={1110.7} y={y + 11} w={33} h={4}>Net-(SW1-B)</PT>
          <PT x={1200.7} y={y} w={11} h={13.5}>1</PT>
          <PT x={1200.7} y={y + 19.5} w={22} h={9.5}>GND</PT>
        </g>
      ))}
      <path d="M1150.500 1403.500H1231M1190.500 1364V1444" stroke="#7f878e" />
    </svg>
  );
}

/* ---------- appearance panel ---------- */
const layers = [
  ["F.Cu", "#c83434", 33],
  ["B.Cu", "#4d7fc4", 34],
  ["F.Adhesive", "#840084", 80],
  ["B.Adhesive", "#000084", 81],
  ["F.Paste", "#a39188", 53],
  ["B.Paste", "#00b0ae", 54],
  ["F.Silkscreen", "#f2eda1", 87],
  ["B.Silkscreen", "#e8b2a7", 88],
  ["F.Mask", "#643a74", 53, "#4f2663"],
  ["B.Mask", "#16796c", 54, "#00625a"],
  ["User.Drawings", "#c2c2c2", 108],
  ["User.Comments", "#5994dc", 120],
  ["User.Eco1", "#b4dbd2", 71.5],
  ["User.Eco2", "#d8c852", 73],
  ["Edge.Cuts", "#d0d2cd", 75],
  ["Margin", "#ff26e2", 54],
  ["F.Courtyard", "#ff26e2", 88],
  ["B.Courtyard", "#26e9ff", 89],
  ["F.Fab", "#afafaf", 40],
  ["B.Fab", "#585d84", 41],
  ["User.1", "#c2c2c2", 45],
  ["User.2", "#5994dc", 46],
  ["User.3", "#b4dbd2", 46],
  ["User.4", "#d8c852", 46],
  ["User.5", "#c2c2c2", 46],
  ["User.6", "#5994dc", 46],
  ["User.7", "#b4dbd2", 46],
  ["User.8", "#d8c852", 46],
  ["User.9", "#e8b2a7", 46],
];

const filters = [
  ["All items", 64.5, "Locked items", 99],
  ["Footprints", 77, "Text", 31],
  ["Tracks", 47, "Vias", 30],
  ["Pads", 35, "Graphics", 65],
  ["Zones", 45, "Rule Areas", 79],
  ["Dimensions", 87, "Other items", 89],
];

const Check = ({ on = true }) => (
  <div className="mr-1 flex size-5 shrink-0 items-center justify-center border border-[#333] bg-white">
    {on && (
      <svg viewBox="0 0 16 12" className="h-3 w-4" fill="none">
        <path d="m1.500 6 4.200 4.200L14.500 1.300" stroke="#333" strokeWidth="1.4" />
      </svg>
    )}
  </div>
);

function Panel() {
  return (
    <div className="flex w-[270px] shrink-0 flex-col text-[16px]">
      <div className="flex h-[31px] items-center bg-[#b9b9b9] pb-0.5 pl-1 text-[18.5px]">
        <T w={104}>Appearance</T>
      </div>
      <div className="flex h-[37px] items-end pl-px text-[18.5px]">
        <div className="flex h-8 w-[69px] items-center border border-b-0 border-[#dcdcdc] bg-white pb-0.5 pl-[5px]">
          <T w={53}>Layers</T>
        </div>
        <div className="flex h-[30px] w-[76px] items-center border border-l-0 border-[#dcdcdc] pl-[3px]">
          <T w={65.5}>Objects</T>
        </div>
        <div className="flex h-[30px] w-[64px] items-center border border-l-0 border-[#dcdcdc] pl-[6px]">
          <T w={39}>Nets</T>
        </div>
        <div className="mr-[2px] h-px flex-1 bg-[#dcdcdc]" />
      </div>
      <div className="mr-[2px] ml-px flex h-[899px] flex-col border-r-2 border-b border-[#dcdcdc] bg-white pt-px pl-[3px]">
        <div className="h-[862px] bg-[#f0f0f0] pt-px">
          {layers.map(([name, c, w, c2], k) => (
            <div key={name} className={"flex h-6 items-center " + (k === 0 ? "bg-[#e1e1e1]" : "")}>
              <svg viewBox="0 0 17 10" className="h-2.5 w-[17px] shrink-0">
                {k === 0 && <path d="M6 0.500 11 5 6 9.500Z" fill="#3c3cff" />}
              </svg>
              <svg viewBox="0 0 15 12" className="h-3 w-[15px] shrink-0">
                <rect width="15" height="12" fill={c} />
                {c2 && <path d="M5 0h5v6H5ZM0 6h5v6H0ZM10 6h5v6h-5Z" fill={c2} />}
              </svg>
              <svg viewBox="0 0 16 16" className="mr-[4.5px] ml-1.5 size-4 shrink-0">
                <circle cx="8" cy="8" r="8" fill={G} />
                <path d="M1.800 8Q8 1.200 14.200 8 8 14.800 1.800 8Z" fill="#f0f0f0" />
                <circle cx="8" cy="8" r="2.1" fill="#f0f0f0" stroke={G} strokeWidth="1.3" />
              </svg>
              <T w={w}>{name}</T>
            </div>
          ))}
        </div>
        <div className="flex h-[34px] items-center pb-0.5 pl-[15px]">
          <svg viewBox="0 0 6 12" className="mr-1 h-3 w-1.5 shrink-0">
            <path d="M0 0 6 6 0 12Z" fill="#000" />
          </svg>
          <T w={163}>Layer Display Options</T>
        </div>
      </div>
      <div className="flex h-[134px] flex-col pt-[11px] pl-[7px]">
        <div className="flex h-6 items-center"><T w={139}>Presets (Ctrl+Tab):</T></div>
        <Combo className="mt-px h-8 w-[256px] text-[18.5px]"><T w={81}>All Layers</T></Combo>
        <div className="mt-1 flex h-6 items-center pb-0.5"><T w={170}>Viewports (Shift+Tab):</T></div>
        <Combo className="h-8 w-[256px] text-[18px]"><T w={22}>---</T></Combo>
      </div>
      <div className="h-1.5 bg-[#dcdcdc]" />
      <div className="flex h-[31px] items-center bg-[#b9b9b9] pb-0.5 pl-1 text-[18.5px]">
        <T w={127}>Selection Filter</T>
      </div>
      <div className="flex flex-col pt-[5px] pl-[5px]">
        {filters.map(([a, aw, b, bw]) => (
          <div key={a} className="flex h-6 items-center">
            <div className="flex w-[131px] items-center"><Check /><T w={aw}>{a}</T></div>
            <div className="flex items-center"><Check on={b !== "Locked items"} /><T w={bw}>{b}</T></div>
          </div>
        ))}
      </div>
    </div>
  );
}

const menus = [
  ["File", 29], ["Edit", 33], ["View", 41], ["Place", 44], ["Route", 50],
  ["Inspect", 60], ["Tools", 45], ["Preferences", 99], ["Help", 41],
];

export default function App() {
  return (
    <div className="flex h-[1476px] w-[2560px] flex-col overflow-hidden bg-[#f0f0f0] font-['Noto_Sans','Open_Sans',sans-serif] text-[18px] leading-none text-black">
      <header className="flex h-[34px] items-center justify-between bg-white">
        <div className="flex items-center pl-[1px]">
          <I className="mr-1 size-[26px]">
            <Board />
            <circle cx="20" cy="14.5" r="1.5" fill="#fff" stroke={O} />
            <circle cx="19" cy="20" r="1.5" fill="#fff" stroke={O} />
          </I>
          <T w={229}>Demo_KiCad — PCB Editor</T>
        </div>
        <svg viewBox="2376 0 155 34" className="mr-[29px] h-[34px] w-[155px]" fill="none" stroke="#000">
          <path d="M2376 16.500h15" />
          <path d="M2445.500 12.500h11v11h-11ZM2448.500 12.500v-3h11v11h-3" />
          <path d="m2516 9 15 15M2531 9l-15 15" strokeWidth="1.1" />
        </svg>
      </header>
      <nav className="flex h-7 items-center gap-[12.5px] bg-white pb-px pl-[7px]">
        {menus.map(([m, w]) => (
          <T key={m} w={w}>{m}</T>
        ))}
      </nav>

      <div className="flex h-[55px] items-center pl-[6.5px]">
        {topIcons.map((ic, k) =>
          ic === "|" ? (
            <div key={k} className="flex w-[9px] shrink-0 justify-center"><VSep /></div>
          ) : (
            <div key={k} className="flex w-[49px] shrink-0 items-center justify-center">{ic}</div>
          )
        )}
      </div>

      <div className="flex h-[51px] items-center pb-px pl-2">
        <Combo className="h-8 w-[317px]"><T w={246}>Track: 1.016 mm (40.00 mils)</T></Combo>
        <div className="mr-[5px] ml-[3px] flex size-[46px] items-center justify-center border border-[#0078d7] bg-[#b3d6f3]">
          <I>
            <path d="M1.5 1v17.500c0 2.500 1 4 3.500 4h14c2.500 0 3.500-1.500 3.500-4V1" stroke={G} strokeWidth="2" />
            <path d="M7 8.5h10M7 12h10" stroke={G} strokeWidth="1.1" />
            <circle cx="12" cy="21.3" r="2.7" fill={B} />
          </I>
        </div>
        <VSep />
        <Combo className="mr-[6px] ml-[6px] h-8 w-[237px]"><T w={183}>Via: use netclass sizes</T></Combo>
        <VSep />
        <Combo white className="mr-2 ml-[6px] h-[31px] w-[191px]">
          <span className="mr-[8px] ml-[3px] size-[9px] border border-[#400] bg-[#c83434]" />
          <T w={99}>F.Cu (PgUp)</T>
        </Combo>
        <I className="mr-[9px] size-9">
          <path d="M0 0h18L8 24H0Z" fill={CU} />
          <path d="M19 0h5v24H8Z" fill="#4d7fc4" />
          <path d="M18.5 0 7.5 24" stroke="#e8e8e8" strokeWidth="2.6" />
          <path d="M18.5 0 7.5 24" stroke="#222" strokeWidth="1.1" strokeDasharray="3 .6" />
        </I>
        <VSep />
        <Combo className="mr-[5px] ml-[6px] h-8 w-[273px]"><T w={202}>0.5000 mm (19.69 mils)</T></Combo>
        <VSep />
        <Combo className="ml-[6px] h-8 w-[151px]"><T w={91}>Zoom 5.00</T></Combo>
      </div>

      <main className="flex h-[1291px] shrink-0">
        <aside className="w-[53px] shrink-0 border-r border-[#a0a0a0] pt-[6.5px]">
          <SideBar items={leftIcons} />
        </aside>
        <Canvas />
        <aside className="w-[53px] shrink-0 border-l border-[#a0a0a0] pt-[6.5px]">
          <SideBar items={rightIcons} />
        </aside>
        <div className="w-1.5 shrink-0 bg-[#dcdcdc]" />
        <Panel />
      </main>

      <footer className="flex h-[17px] shrink-0 items-start border-t border-[#c8c8c8] pt-px pl-[17px] leading-[21px]">
        <div className="flex w-[89px] shrink-0"><T w={40}>Pads</T></div>
        <div className="flex w-[84px] shrink-0"><T w={35}>Vias</T></div>
        <div className="flex w-[184px] shrink-0"><T w={135}>Track Segments</T></div>
        <div className="flex w-[88px] shrink-0"><T w={38}>Nets</T></div>
        <div className="flex w-[100px] shrink-0"><T w={80}>Unrouted</T></div>
      </footer>
    </div>
  );
}
